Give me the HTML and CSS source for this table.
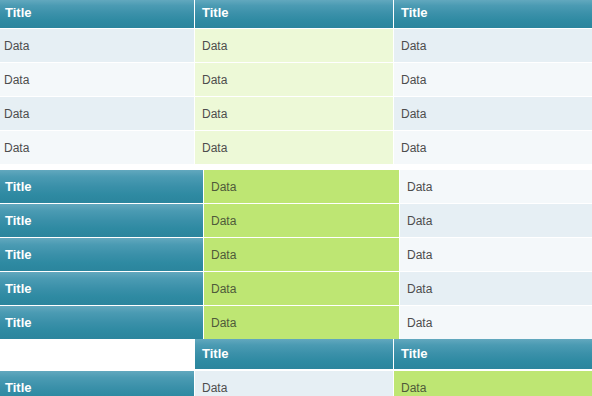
FILE: index.html
```html
<!DOCTYPE html>
<html>
<head>
<meta charset="utf-8">
<link rel="stylesheet" href="styles.css">
</head>
<body>
<div class="page">
  <div class="grid grid-top">
    <div class="cell head first">Title</div>
    <div class="cell head">Title</div>
    <div class="cell head">Title</div>

    <div class="cell first blue">Data</div>
    <div class="cell pale">Data</div>
    <div class="cell blue">Data</div>

    <div class="cell first light">Data</div>
    <div class="cell pale">Data</div>
    <div class="cell light">Data</div>

    <div class="cell first blue">Data</div>
    <div class="cell pale">Data</div>
    <div class="cell blue">Data</div>

    <div class="cell first light">Data</div>
    <div class="cell pale">Data</div>
    <div class="cell light">Data</div>
  </div>

  <div class="grid grid-side">
    <div class="cell head first">Title</div>
    <div class="cell green">Data</div>
    <div class="cell light">Data</div>

    <div class="cell head first">Title</div>
    <div class="cell green">Data</div>
    <div class="cell blue">Data</div>

    <div class="cell head first">Title</div>
    <div class="cell green">Data</div>
    <div class="cell light">Data</div>

    <div class="cell head first">Title</div>
    <div class="cell green">Data</div>
    <div class="cell blue">Data</div>

    <div class="cell head first">Title</div>
    <div class="cell green">Data</div>
    <div class="cell light">Data</div>
  </div>

  <div class="grid grid-both">
    <div class="cell empty"></div>
    <div class="cell head tall">Title</div>
    <div class="cell head tall">Title</div>

    <div class="cell head first">Title</div>
    <div class="cell blue">Data</div>
    <div class="cell green">Data</div>
  </div>
</div>
</body>
</html>
```

FILE: styles.css
```css
html, body {
  margin: 0;
  padding: 0;
  background: #ffffff;
}

body {
  width: 592px;
  height: 396px;
  overflow: hidden;
  font-family: "Liberation Sans", Arial, sans-serif;
}

.page {
  display: flex;
  flex-direction: column;
}

.grid {
  display: grid;
  background: #ffffff;
}

.grid-top {
  grid-template-columns: 194px 198px 198px;
  grid-template-rows: 28px repeat(4, 33px);
  column-gap: 1px;
  row-gap: 1px;
}

.grid-side {
  margin-top: 6px;
  grid-template-columns: 203px 195px 192px;
  grid-auto-rows: 33px;
  column-gap: 1px;
  row-gap: 1px;
}

.grid-both {
  grid-template-columns: 194px 198px 198px;
  grid-template-rows: 30px 33px;
  column-gap: 1px;
  row-gap: 2px;
}

.cell {
  display: flex;
  align-items: center;
  padding-left: 7px;
  font-size: 12px;
  color: #4d4d4d;
  white-space: nowrap;
}

.cell.first {
  padding-left: 4px;
}

.head {
  color: #ffffff;
  font-weight: bold;
  font-size: 13px;
  background: linear-gradient(to bottom, #62a8be 0%, #4b9bb3 20%, #3a90a9 50%, #2e8aa2 75%, #2b859d 100%);
}

.head.first {
  padding-left: 5px;
}

.grid-top .head {
  padding-bottom: 4px;
}

.tall {
  padding-bottom: 2px;
}

.blue {
  background: #e6eff4;
}

.light {
  background: #f4f8fa;
}

.pale {
  background: #edf9d7;
}

.green {
  background: #bee673;
  color: #4f5a3a;
}

.empty {
  background: #ffffff;
}
```
